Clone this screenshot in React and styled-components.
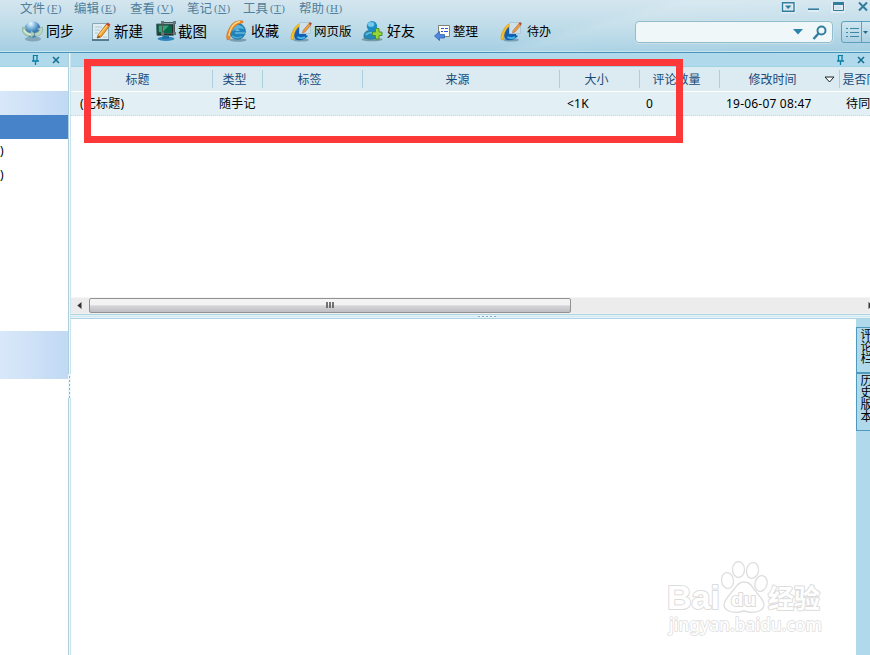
import styled, { createGlobalStyle } from "styled-components";

const menus = [
  { name: "文件", letter: "F", width: 54 },
  { name: "编辑", letter: "E", width: 56 },
  { name: "查看", letter: "V", width: 57 },
  { name: "笔记", letter: "N", width: 56 },
  { name: "工具", letter: "T", width: 56 },
  { name: "帮助", letter: "H", width: 56 },
];

const columns = [
  { name: "标题", width: 142, pad: 9, value: "(无标题)", shift: -8 },
  { name: "类型", width: 50, pad: 6, value: "随手记", shift: -6 },
  { name: "标签", width: 100, pad: 6, value: "", shift: -6 },
  { name: "来源", width: 197, pad: 6, value: "", shift: -7 },
  { name: "大小", width: 80, pad: 7, value: "<1K", shift: -6 },
  { name: "评论数量", width: 80, pad: 6, value: "0", shift: -6 },
  { name: "修改时间", width: 120, pad: 6, value: "19-06-07 08:47", shift: -1, sorted: true },
  { name: "是否同步", width: 80, pad: 6, value: "待同步", shift: -26 },
];

const SyncIcon = () => (
  <svg width="24" height="24" viewBox="0 0 24 24">
    <defs>
      <radialGradient id="globe" cx="40%" cy="15%">
        <stop offset="0" stopColor="#f2fbff" />
        <stop offset=".5" stopColor="#8bbfe4" />
        <stop offset="1" stopColor="#3d7db5" />
      </radialGradient>
    </defs>
    <ellipse cx="12" cy="19" rx="8" ry="2.5" fill="#6f93a5" opacity=".7" />
    <circle cx="11.5" cy="9.5" r="8.3" fill="url(#globe)" />
    <path d="M1.5 7 Q0 12 4 15 Q7 17 10 16 L10 18 L14 14 L10 10.5 L10 13 Q6 13 4 9 L6 8Z" fill="#aecdb8" stroke="#76a59b" strokeWidth=".5" />
    <path d="M21.5 7 Q23 12 19 15 Q17 16.5 14 16 L14 13 Q17 13 18.5 10 L16 9Z" fill="#bcd6bd" stroke="#76a59b" strokeWidth=".5" />
    <path d="M3 10 Q5 14 10 14.5" stroke="#e4f1e2" strokeWidth="1.2" fill="none" />
  </svg>
);

const NewIcon = () => (
  <svg width="24" height="24" viewBox="0 0 24 24">
    <path d="M2.5 3.5 H18.5 V20 H2.5Z" fill="#dfecf1" stroke="#8aa9b7" />
    <path d="M2 20 H19" stroke="#3f6a80" strokeWidth="1.6" />
    <path d="M5 7 H12 M5 10 H10 M5 13 H8 M13 17 H17" stroke="#b2c8d2" />
    <path d="M8 15 L16.5 4 L19.5 6 L11 17 L7 18Z" fill="#f7a632" stroke="#a75418" strokeWidth=".7" />
    <path d="M9 15 L17.5 5" stroke="#ffe58a" />
    <path d="M16 4.5 L17.8 2.5 L20.5 4.5 L19 6.5Z" fill="#c84630" />
    <path d="M7 18 L9 16 L10 17Z" fill="#3b302b" />
  </svg>
);

const CaptureIcon = () => (
  <svg width="24" height="24" viewBox="0 0 24 24">
    <ellipse cx="12" cy="18.7" rx="8.5" ry="2.2" fill="#2f86bd" />
    <path d="M9 15 H15 V19 H8Z" fill="#1e6ea8" />
    <path d="M2.5 4 H19.5 V15.5 H3Z" fill="#1d3330" stroke="#4d757a" />
    <path d="M4.5 5.5 H18 V13.5 H4.8Z" fill="#06694a" />
    <path d="M4.5 5.5 H15 L9 12 H4.8Z" fill="#35a474" />
    <path d="M8.5 2.5 H20.5 V13.5 H8.5Z" fill="none" stroke="#51565b" />
    <path d="M7 1 H10 V4 H7Z M19 1 H22 V4 H19Z M19 12 H22 V15 H19Z M7 12 H10 V15 H7Z" fill="#697378" />
  </svg>
);

const BrowserIcon = () => (
  <svg width="24" height="24" viewBox="0 0 24 24">
    <ellipse cx="13" cy="20" rx="8.5" ry="1.7" fill="#537b8d" opacity=".6" />
    <circle cx="12.5" cy="11.3" r="8" fill="#1f84bd" stroke="#17648f" strokeWidth=".6" />
    <path d="M6 9 Q9 4 14 5 Q18 6 19 9 Q12 7 6 12Z" fill="#58b4dc" />
    <path d="M10 10.5 Q12.5 8.5 15 10.5Z" fill="#d3f0f8" />
    <path d="M10 13 H20" stroke="#7cc4de" strokeWidth="1.2" />
    <path d="M7 16 Q12 19.5 17 16.5" fill="none" stroke="#4fb0d8" strokeWidth="1.3" />
    <path d="M18 1 Q9 -.5 5 7 Q0 16 2.5 20 L5 19 Q4 14 8 8.5 Q11 4 18 2.5Z" fill="#f08a24" stroke="#cc6714" strokeWidth=".6" />
    <path d="M15 1.5 Q8 2.5 5 11 L3.8 16" fill="none" stroke="#ffd98a" strokeWidth="1.3" />
  </svg>
);

const WebIcon = () => (
  <svg width="24" height="24" viewBox="0 0 24 24">
    <ellipse cx="11" cy="20" rx="8" ry="1.6" fill="#537b8d" opacity=".6" />
    <path d="M4 15 Q5 8 10 6 L16 8 V15 L18 16 Q14 21 7 20 Q4 19 4 15Z" fill="#1260b4" />
    <path d="M7.5 17 Q11 19.5 15 17" fill="none" stroke="#45b8e4" strokeWidth="1.8" />
    <path d="M12 3 Q6 4 3 11 Q0 17 1.5 20 L3.5 19 Q3.5 13 6.5 9 Q9 6 12 4Z" fill="#f8c51e" stroke="#e0951a" strokeWidth=".7" />
    <path d="M9.5 2.5 H20.5 V13.5 H9.5Z" fill="#cfe1e8" stroke="#abc9d6" />
    <path d="M13 10.5 L19 3.5 L21 5 L15 12 L12.5 13Z" fill="#ef9c38" stroke="#a0634c" strokeWidth=".5" />
    <path d="M18.5 3.8 L20 2 L22 3.5 L20.8 5.3Z" fill="#b64e3c" />
  </svg>
);

const FriendIcon = () => (
  <svg width="24" height="24" viewBox="0 0 24 24">
    <ellipse cx="11" cy="19.5" rx="10.5" ry="1.8" fill="#60808c" opacity=".7" />
    <path d="M3 18 Q2 12 7 10.5 H14 Q17 12 17 18 Q9 20.5 3 18Z" fill="#2489b9" stroke="#287090" strokeWidth=".6" />
    <circle cx="11" cy="6.2" r="5.2" fill="#1b8dc4" />
    <ellipse cx="10" cy="4.5" rx="3.3" ry="2.4" fill="#75c9ea" />
    <path d="M5 15 Q7 12 11 13" fill="none" stroke="#65c3df" strokeWidth="1.6" />
    <path d="M14.5 8.5 H18 V12 H21 V15.5 H18 V19 H14.5 V15.5 H11.5 V12 H14.5Z" fill="#97d636" stroke="#438d26" strokeWidth=".9" />
  </svg>
);

const ArrangeIcon = () => (
  <svg width="18" height="18" viewBox="0 0 18 18">
    <path d="M4.5 2.5 H15.5 V13.5 H4.5Z" fill="#fffef4" stroke="#7d827d" />
    <path d="M7 5.5 H10 M11 5.5 H14 M7 8.5 H9 M10 8.5 H14" stroke="#3154e4" />
    <path d="M.5 13 L5.5 8.5 V11.5 H10.5 V15 H5.5 V17.5Z" fill="#5087dc" stroke="#285bab" strokeWidth=".7" />
  </svg>
);

const tools = [
  { label: "同步", icon: <SyncIcon />, iconWidth: 25, width: 69, size: 14 },
  { label: "新建", icon: <NewIcon />, iconWidth: 24, width: 64, size: 14.5 },
  { label: "截图", icon: <CaptureIcon />, iconWidth: 24, width: 71, size: 14.5 },
  { label: "收藏", icon: <BrowserIcon />, iconWidth: 26, width: 65, size: 14 },
  { label: "网页版", icon: <WebIcon />, iconWidth: 24, width: 71, size: 12.5 },
  { label: "好友", icon: <FriendIcon />, iconWidth: 26, width: 73, size: 14 },
  { label: "整理", icon: <ArrangeIcon />, iconWidth: 19, width: 66, size: 12.5 },
  { label: "待办", icon: <WebIcon />, iconWidth: 27, width: 60, size: 12 },
];

const PinIcon = () => (
  <svg width="9" height="10" viewBox="0 0 9 10">
    <path d="M2 .5 H7" stroke="#087fa5" />
    <path d="M2.5 0 V6 M6 0 V6 M1 6 H8 M4.5 6 V10" fill="none" stroke="#087fa5" strokeWidth="1.3" />
  </svg>
);

const CloseIcon = () => (
  <svg width="8" height="8" viewBox="0 0 8 8">
    <path d="M1 1 L7 7 M7 1 L1 7" stroke="#16718f" strokeWidth="1.6" />
  </svg>
);

const WindowControls = () => (
  <svg width="90" height="16" viewBox="0 0 90 16">
    <g fill="none" stroke="#fff" strokeWidth="4" opacity=".35">
      <path d="M3 2.5 H14 V10.5 H3Z M28 9 H39 M53 3 H63 V10 H53Z" />
    </g>
    <path d="M2.5 1.8 H14 V10.2 H2.5Z" fill="none" stroke="#347c9e" strokeWidth="1.4" />
    <path d="M5 4.5 H11.5 L8.2 8Z" fill="#347c9e" />
    <path d="M28 8.2 H39" stroke="#347c9e" strokeWidth="1.6" />
    <path d="M53.5 2 H63.5 V9.5 H53.5Z" fill="none" stroke="#347c9e" />
    <path d="M53 2.5 H64" stroke="#347c9e" strokeWidth="3" />
    <path d="M79 1.5 L87 9.5 M87 1.5 L79 9.5" stroke="#347c9e" strokeWidth="2" />
  </svg>
);

const Watermark = () => (
  <Brand>
    <svg width="165" height="82" viewBox="0 0 165 82">
      <g fill="#fff" stroke="#dedede" strokeWidth="1.3">
        <ellipse cx="61.5" cy="22.5" rx="6" ry="8" transform="rotate(-8 61.5 22.5)" />
        <ellipse cx="72.5" cy="11.5" rx="6" ry="8" />
        <ellipse cx="86.5" cy="12.5" rx="6" ry="8" transform="rotate(10 86.5 12.5)" />
        <ellipse cx="95" cy="25.5" rx="6" ry="8" transform="rotate(16 95 25.5)" />
        <path d="M78 24 Q84 24 87 30 L95 40 Q101 48 95 52 Q89 56 78 53 Q67 56 61 52 Q55 48 61 40 L69 30 Q73 24 78 24Z" />
      </g>
      <g fill="#fff" stroke="#dcdcdc" strokeWidth="2" strokeLinejoin="round" paintOrder="stroke" fontWeight="700">
        <text x="1" y="51" fontFamily="Liberation Sans" fontSize="34" textLength="53" lengthAdjust="spacingAndGlyphs">Bai</text>
        <text x="65" y="48" fontFamily="Liberation Sans" fontSize="19" textLength="25" lengthAdjust="spacingAndGlyphs">du</text>
        <text x="102" y="50" fontFamily="Noto Sans CJK SC" fontSize="26" textLength="52" lengthAdjust="spacingAndGlyphs">经验</text>
        <text x="3" y="73" fontFamily="Noto Sans" fontSize="17.5" fontWeight="500" strokeWidth="1.5" textLength="153" lengthAdjust="spacingAndGlyphs">jingyan.baidu.com</text>
      </g>
    </svg>
  </Brand>
);

const App = () => {
  return (
    <Page>
      <GlobalStyle />
      <Header>
        <HeaderMain>
          <MenuBar>
            {menus.map((m) => (
              <MenuItem key={m.name} $width={m.width}>
                {m.name}
                <Shortcut>
                  (<u>{m.letter}</u>)
                </Shortcut>
              </MenuItem>
            ))}
          </MenuBar>
          <Toolbar>
            {tools.map((t) => (
              <Tool key={t.label} $width={t.width} $size={t.size}>
                <ToolIcon $width={t.iconWidth}>{t.icon}</ToolIcon>
                {t.label}
              </Tool>
            ))}
          </Toolbar>
        </HeaderMain>
        <HeaderSide>
          <Controls>
            <WindowControls />
          </Controls>
          <SearchRow>
            <SearchBox>
              <svg width="36" height="18" viewBox="0 0 36 18">
                <path d="M0 6 H10 L5 11.5Z" fill="#2d84aa" />
                <circle cx="28.5" cy="7.5" r="4" fill="none" stroke="#347f9f" strokeWidth="2" />
                <path d="M25.5 10.5 L20.5 16" stroke="#347f9f" strokeWidth="2.5" />
              </svg>
            </SearchBox>
            <ViewButton>
              <svg width="30" height="20" viewBox="0 0 30 20">
                <path d="M4 6.5 H6 M8 6.5 H17 M4 10.5 H6 M8 10.5 H17 M4 14.5 H6 M8 14.5 H17" stroke="#3e86a8" />
                <path d="M19.5 0 V20" stroke="#5e9fbd" />
                <path d="M21 9 H26 L23.5 12Z" fill="#276c8d" />
              </svg>
            </ViewButton>
          </SearchRow>
        </HeaderSide>
      </Header>
      <Body>
        <Sidebar>
          <PanelBar $right={8}>
            <PinIcon />
            <CloseIcon />
          </PanelBar>
          <TreeRow />
          <TreeRow $group />
          <TreeRow $selected />
          <TreeRow>)</TreeRow>
          <TreeRow>)</TreeRow>
          <TreeGap />
          <TreeGroup />
        </Sidebar>
        <VerticalSplitter>
          <VerticalGrip />
        </VerticalSplitter>
        <Content>
          <PanelBar $right={5}>
            <PinIcon />
            <CloseIcon />
          </PanelBar>
          <TableHead>
            {columns.map((c) => (
              <HeadCell key={c.name} $width={c.width}>
                <HeadText $shift={c.shift}>{c.name}</HeadText>
                {c.sorted && (
                  <SortMark width="11" height="7" viewBox="0 0 11 7">
                    <path d="M1 1 H10 L5.5 6Z" fill="#fff" stroke="#17242c" />
                  </SortMark>
                )}
              </HeadCell>
            ))}
          </TableHead>
          <TableRow>
            {columns.map((c) => (
              <Cell key={c.name} $width={c.width} $pad={c.pad}>
                {c.value}
              </Cell>
            ))}
          </TableRow>
          <EmptyArea />
          <ScrollTrack>
            <ScrollArrow>
              <svg width="5" height="7" viewBox="0 0 5 7">
                <path d="M4.5 0 V7 L.3 3.5Z" fill="#333" />
              </svg>
            </ScrollArrow>
            <ScrollThumb>
              <svg width="9" height="7" viewBox="0 0 9 7">
                <path d="M1 0 V6 M4 0 V6 M7 0 V6" stroke="#555" strokeWidth="1.6" />
              </svg>
            </ScrollThumb>
            <TrackRest>
              <svg width="5" height="7" viewBox="0 0 5 7">
                <path d="M.5 0 V7 L4.7 3.5Z" fill="#333" />
              </svg>
            </TrackRest>
          </ScrollTrack>
          <HorizontalSplitter>
            <HorizontalGrip />
          </HorizontalSplitter>
          <Lower>
            <Preview>
              <Watermark />
            </Preview>
            <SideTabs>
              <SideTab $height={46}>评论栏</SideTab>
              <SideTab $height={58}>历史版本</SideTab>
            </SideTabs>
          </Lower>
        </Content>
      </Body>
      <Highlight />
    </Page>
  );
};

export default App;

const GlobalStyle = createGlobalStyle`
  * {
    box-sizing: border-box;
  }
  body {
    margin: 0;
    overflow: hidden;
    font-family: "Noto Sans", "Noto Sans CJK SC", sans-serif;
    font-size: 12px;
  }
  svg {
    display: block;
    flex-shrink: 0;
  }
`;

const Page = styled.div`
  position: relative;
  width: 870px;
  height: 655px;
  display: flex;
  flex-direction: column;
  overflow: hidden;
  background: #fff;
`;

const Header = styled.header`
  height: 53px;
  flex-shrink: 0;
  display: flex;
  background:
    linear-gradient(164deg, transparent 63%, rgba(255, 255, 255, 0.12) 66%, transparent 95%),
    linear-gradient(#d4e6ef, #bfdce9 50%, #a4cfe2);
  border-bottom: 1px solid #4995b8;
  box-shadow: inset 0 -1px #c7e5f1;
`;

const HeaderMain = styled.div`
  width: 635px;
  flex-shrink: 0;
`;

const MenuBar = styled.nav`
  display: flex;
  height: 17px;
  padding-left: 20px;
`;

const MenuItem = styled.div`
  width: ${(props) => props.$width}px;
  display: flex;
  color: #527f9b;
  font-family: "Noto Sans CJK SC", sans-serif;
  font-size: 12.5px;
  line-height: 16px;
  white-space: nowrap;
`;

const Shortcut = styled.span`
  font-family: "Liberation Serif", serif;
  font-size: 11px;
  letter-spacing: 0.4px;
  margin-left: 2px;
`;

const Toolbar = styled.div`
  display: flex;
  height: 28px;
  padding-left: 21px;
`;

const Tool = styled.div`
  width: ${(props) => props.$width}px;
  flex-shrink: 0;
  display: flex;
  align-items: center;
  font-family: "Noto Sans CJK SC", sans-serif;
  font-size: ${(props) => props.$size}px;
  line-height: 25px;
  padding-bottom: 2px;
  color: #000;
  white-space: nowrap;
`;

const ToolIcon = styled.span`
  width: ${(props) => props.$width}px;
  flex-shrink: 0;
  padding-top: 3px;
`;

const HeaderSide = styled.div`
  width: 235px;
  flex-shrink: 0;
  overflow: hidden;
`;

const Controls = styled.div`
  height: 21px;
  padding: 1px 0 0 145px;
`;

const SearchRow = styled.div`
  display: flex;
  gap: 8px;
`;

const SearchBox = styled.div`
  width: 198px;
  height: 22px;
  flex-shrink: 0;
  display: flex;
  align-items: center;
  justify-content: flex-end;
  padding-right: 3px;
  border: 1px solid #91bdcf;
  border-radius: 4px;
  background: #eff7f9;
  box-shadow: 0 0 1px 1px #cae2e5;
`;

const ViewButton = styled.div`
  width: 40px;
  height: 22px;
  flex-shrink: 0;
  border: 1px solid #5d9fbe;
  border-radius: 3px;
  background: linear-gradient(#d0e7f1, #abd1e3);
`;

const Body = styled.main`
  flex: 1;
  display: flex;
  min-height: 0;
`;

const Sidebar = styled.aside`
  width: 68px;
  background: #fff;
`;

const PanelBar = styled.div`
  height: 14px;
  flex-shrink: 0;
  display: flex;
  align-items: center;
  justify-content: flex-end;
  gap: 12px;
  padding-right: ${(props) => props.$right}px;
  background: #b0daec;
  border-bottom: 1px solid #a0d3e5;
`;

const TreeRow = styled.div`
  height: 24px;
  line-height: 23px;
  color: #000;
  background: ${(props) =>
    props.$selected
      ? "#4783c9"
      : props.$group
        ? "linear-gradient(90deg, #d9e8f9, #c1d9f4)"
        : "#fff"};
`;

const TreeGap = styled.div`
  height: 144px;
`;

const TreeGroup = styled(TreeRow)`
  height: 48px;
  background: linear-gradient(90deg, #d9e8f9, #c1d9f4);
`;

const VerticalSplitter = styled.div`
  width: 3px;
  flex-shrink: 0;
  padding-top: 321px;
  background: linear-gradient(90deg, #aed0dd 1px, #edf8fb 1px 2px, #cbe4ed 2px);
`;

const VerticalGrip = styled.div`
  height: 24px;
  background: repeating-linear-gradient(#e6f4f9 0 2px, #83b2c9 2px 4px);
  border: solid #eef8fb;
  border-width: 0 1px;
`;

const Content = styled.section`
  width: 799px;
  display: flex;
  flex-direction: column;
  overflow: hidden;
`;

const TableHead = styled.div`
  height: 25px;
  flex-shrink: 0;
  display: flex;
  align-items: center;
  background: #dceaf1;
  border-bottom: 1px solid #fff;
`;

const HeadCell = styled.div`
  width: ${(props) => props.$width}px;
  height: 18px;
  flex-shrink: 0;
  display: flex;
  align-items: center;
  justify-content: center;
  border-right: 1px solid #abcfdf;
`;

const HeadText = styled.span`
  color: #174a79;
  margin-left: ${(props) => props.$shift}px;
  white-space: nowrap;
`;

const SortMark = styled.svg`
  margin: 1px -25px 0 27px;
`;

const TableRow = styled.div`
  height: 24px;
  flex-shrink: 0;
  display: flex;
  align-items: center;
  background: #e2f0f5;
  border-bottom: 1px dotted #c0d8e0;
`;

const Cell = styled.div`
  width: ${(props) => props.$width}px;
  padding-left: ${(props) => props.$pad}px;
  flex-shrink: 0;
  letter-spacing: 0.2px;
  line-height: 20px;
  white-space: nowrap;
`;

const EmptyArea = styled.div`
  height: 181px;
  flex-shrink: 0;
`;

const ScrollTrack = styled.div`
  height: 17px;
  flex-shrink: 0;
  display: flex;
  background: #ececec;
  border-top: 1px solid #f5f5f5;
  border-bottom: 1px solid #f1f1f1;
`;

const ScrollArrow = styled.div`
  width: 18px;
  display: flex;
  align-items: center;
  justify-content: center;
  padding-right: 2px;
`;

const ScrollThumb = styled.div`
  width: 482px;
  height: 15px;
  display: flex;
  align-items: center;
  justify-content: center;
  border: 1px solid #929292;
  border-radius: 2px;
  background: linear-gradient(#f3f3f3 0 45%, #d6d6d8 52%, #bfbfc3);
`;

const TrackRest = styled.div`
  flex: 1;
  display: flex;
  align-items: center;
  justify-content: flex-end;
  margin-right: -3px;
`;

const HorizontalSplitter = styled.div`
  height: 5px;
  flex-shrink: 0;
  padding: 2px 0 0 407px;
  background: linear-gradient(#aed3e2 1px, #e6f4f9 1px 2px, #d2e9f2 2px 3px, #e6f4f9 3px 4px, #aed3e2 4px);
`;

const HorizontalGrip = styled.div`
  width: 18px;
  height: 1px;
  background: repeating-linear-gradient(90deg, #8aaec6 0 2px, #e6f4f9 2px 4px);
`;

const Lower = styled.div`
  flex: 1;
  display: flex;
`;

const Preview = styled.div`
  width: 785px;
  display: flex;
  align-items: flex-end;
  justify-content: flex-end;
  background: #fff;
`;

const Brand = styled.div`
  margin: 0 25px 15px 0;
`;

const SideTabs = styled.div`
  width: 14px;
  padding-top: 8px;
  background: #b0daec;
`;

const SideTab = styled.div`
  width: 20px;
  height: ${(props) => props.$height}px;
  border: 1px solid #4d9abc;
  font-family: "Noto Sans CJK SC", sans-serif;
  line-height: 18px;
  writing-mode: vertical-rl;
  white-space: nowrap;
`;

const Highlight = styled.div`
  position: absolute;
  left: 84px;
  top: 59px;
  width: 599px;
  height: 84px;
  border: 7px solid #fc3838;
`;
